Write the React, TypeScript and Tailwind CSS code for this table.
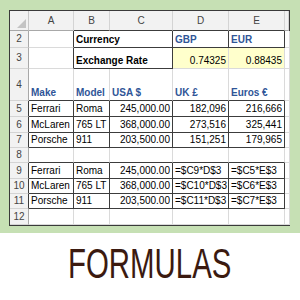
import React from "react";

type Cell = {
  t?: string;
  span?: number;
  bold?: boolean;
  blue?: boolean;
  right?: boolean;
  yellow?: boolean;
};

const rows: Cell[][] = [
  // row 2
  [{}, { t: "Currency", span: 2, bold: true }, { t: "GBP", bold: true, blue: true }, { t: "EUR", bold: true, blue: true }, {}],
  // row 3
  [{}, { t: "Exchange Rate", span: 2, bold: true }, { t: "0.74325", right: true, yellow: true }, { t: "0.88435", right: true, yellow: true }, {}],
  // row 4
  [
    { t: "Make", bold: true, blue: true },
    { t: "Model", bold: true, blue: true },
    { t: "USA $", bold: true, blue: true },
    { t: "UK £", bold: true, blue: true },
    { t: "Euros €", bold: true, blue: true },
    {},
  ],
  [{ t: "Ferrari" }, { t: "Roma" }, { t: "245,000.00", right: true }, { t: "182,096", right: true }, { t: "216,666", right: true }, {}],
  [{ t: "McLaren" }, { t: "765 LT" }, { t: "368,000.00", right: true }, { t: "273,516", right: true }, { t: "325,441", right: true }, {}],
  [{ t: "Porsche" }, { t: "911" }, { t: "203,500.00", right: true }, { t: "151,251", right: true }, { t: "179,965", right: true }, {}],
  [{}, {}, {}, {}, {}, {}],
  [{ t: "Ferrari" }, { t: "Roma" }, { t: "245,000.00", right: true }, { t: "=$C9*D$3" }, { t: "=$C5*E$3" }, {}],
  [{ t: "McLaren" }, { t: "765 LT" }, { t: "368,000.00", right: true }, { t: "=$C10*D$3" }, { t: "=$C6*E$3" }, {}],
  [{ t: "Porsche" }, { t: "911" }, { t: "203,500.00", right: true }, { t: "=$C11*D$3" }, { t: "=$C7*E$3" }, {}],
  [{}, {}, {}, {}, {}, {}],
];

// excel row number r (2..12), column index c (0=rownum,1=A..5=E,6=F)
const dataRows = [5, 6, 7, 9, 10, 11];

function darkRight(r: number, c: number): boolean {
  // edge between c and c+1
  if (r === 2) return c === 1 || c === 3 || c === 4 || c === 5;
  if (r === 3) return c === 1 || c === 3;
  if (dataRows.includes(r)) return c >= 0 && c <= 5;
  return false;
}

function darkBottom(r: number, c: number): boolean {
  // edge between r and r+1 at column c
  if (r === 1) return c >= 2 && c <= 5;
  if (r === 2) return c >= 2 && c <= 5;
  if (r === 3) return c === 2 || c === 3;
  if (r === 4 || r === 5 || r === 6 || r === 7 || r === 8 || r === 9 || r === 10 || r === 11) return c >= 1 && c <= 5;
  return false;
}

const cols = ["A", "B", "C", "D", "E", ""];

export default function App() {
  return (
    <div className="w-[300px] h-[300px] bg-white flex flex-col overflow-hidden">
      <div className="h-[233px] bg-[#c6e0b4] pl-[9px] pt-[10px]">
        <div
          className="w-[281px] h-[216px] border border-[#3a3a3a] bg-white grid grid-cols-[19px_45px_36px_63px_56px_56px_4px] grid-rows-[20px_17px_21px_32px_16px_16px_15px_15px_16px_15px_15px_16px] text-[10px] leading-[12px] text-black"
          style={{ fontFamily: '"Liberation Sans", Arial, sans-serif' }}
        >
          {/* corner */}
          <div className="relative bg-[#f2f2f2] border-r border-b border-r-[#c8c8c8] border-b-[#a8a8a8]">
            <div className="absolute right-[2px] bottom-[2px] w-0 h-0 border-l-[9px] border-l-transparent border-b-[9px] border-b-[#c4c4c4]" />
          </div>
          {cols.map((h, i) => (
            <div
              key={"h" + i}
              className={
                "bg-[#f2f2f2] border-r border-r-[#d4d4d4] border-b flex items-center justify-center text-[#444] " +
                (darkBottom(1, i + 1) ? "border-b-[#3c3c3c]" : "border-b-[#a8a8a8]")
              }
            >
              {h}
            </div>
          ))}
          {rows.map((row, ri) => {
            const r = ri + 2;
            let c = 1;
            const cells = row.map((cell, k) => {
              const span = cell.span ?? 1;
              const start = c;
              const end = c + span - 1;
              c += span;
              let cls =
                "flex items-end pb-[1px] px-[2px] whitespace-nowrap overflow-hidden border-r border-b ";
              cls += darkRight(r, end) ? "border-r-[#3c3c3c] " : "border-r-[#dadada] ";
              let db = true;
              for (let x = start; x <= end; x++) if (!darkBottom(r, x)) db = false;
              cls += db ? "border-b-[#3c3c3c] " : "border-b-[#dadada] ";
              if (span === 2) cls += "col-span-2 ";
              if (cell.right) cls += "justify-end ";
              if (cell.bold) cls += "font-bold ";
              if (cell.blue) cls += "text-[#2f5597] ";
              if (cell.yellow) cls += "bg-[#ffffcc] ";
              return (
                <div key={r + "-" + k} className={cls}>
                  {cell.t ?? ""}
                </div>
              );
            });
            return (
              <React.Fragment key={"r" + r}>
                <div
                  className={
                    "bg-[#f2f2f2] border-r border-b border-b-[#d4d4d4] flex items-center justify-center text-[#444] " +
                    (darkRight(r, 0) ? "border-r-[#3c3c3c]" : "border-r-[#a8a8a8]")
                  }
                >
                  {r}
                </div>
                {cells}
              </React.Fragment>
            );
          })}
        </div>
      </div>
      <div className="flex-1 flex justify-center pt-[10px]">
        <span
          className="inline-block text-[42px] leading-none text-[#3b1a10] scale-x-[0.7]"
          style={{ fontFamily: '"Liberation Sans", Arial, sans-serif' }}
        >
          FORMULAS
        </span>
      </div>
    </div>
  );
}
